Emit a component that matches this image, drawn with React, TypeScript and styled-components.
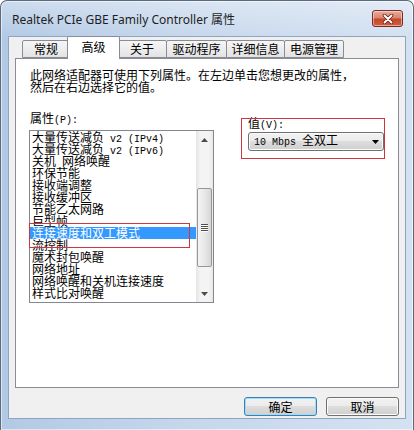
import React from 'react';
import styled, { createGlobalStyle } from 'styled-components';

const CJK = `"Noto Sans CJK SC", "Noto Sans", sans-serif`;
const MONO = `"Liberation Mono", "DejaVu Sans Mono", monospace`;

const GlobalStyle = createGlobalStyle`
  html, body {
    margin: 0;
    padding: 0;
    background: #ffffff;
  }
  body {
    width: 414px;
    height: 430px;
    overflow: hidden;
    font-family: ${CJK};
    font-size: 12px;
    color: #000;
  }
  * {
    box-sizing: border-box;
  }
`;

const Window = styled.div`
  width: 414px;
  height: 430px;
  display: flex;
  flex-direction: column;
  padding: 0 7px 11px 7px;
  border: 1px solid #5b6a7d;
  border-bottom: none;
  border-radius: 7px 7px 0 0;
  background:
    linear-gradient(180deg, rgba(255, 255, 255, 0.35) 0%, rgba(255, 255, 255, 0) 36px),
    linear-gradient(90deg, #b2c9e5 0%, #c6d7ec 45%, #d4e1f1 100%);
  box-shadow: inset 0 0 0 1px rgba(255, 255, 255, 0.55);
`;

const TitleBar = styled.div`
  height: 35px;
  flex: none;
  display: flex;
  align-items: center;
  justify-content: space-between;
  padding: 0 3px 0 4px;
`;

const Title = styled.span`
  font-family: "Noto Sans", ${CJK};
  font-size: 12px;
  color: #1e1e1e;
  white-space: nowrap;
`;

const CloseButton = styled.div`
  width: 31px;
  height: 17px;
  display: flex;
  align-items: center;
  justify-content: center;
  border: 1px solid #7a2a1e;
  border-radius: 3px;
  background: linear-gradient(180deg, #e9a99b 0%, #d98670 45%, #c8452c 55%, #d2603e 100%);
  box-shadow: inset 0 0 0 1px rgba(255, 255, 255, 0.45);
`;

const Client = styled.div`
  flex: 1;
  display: flex;
  flex-direction: column;
  padding: 0 6px;
  background: #f0f0f0;
  border: 1px solid #8ea4c0;
`;

const TabStrip = styled.div`
  height: 21px;
  flex: none;
  display: flex;
  align-items: flex-end;
  padding-left: 8px;
  position: relative;
  z-index: 1;
`;

const Tab = styled.div<{ $w: number; $active?: boolean }>`
  width: ${(p) => p.$w}px;
  height: ${(p) => (p.$active ? 23 : 18)}px;
  margin: ${(p) => (p.$active ? '0 -2px -1px -3px' : '0 0 0 -1px')};
  display: flex;
  align-items: center;
  justify-content: center;
  padding-bottom: ${(p) => (p.$active ? 3 : 0)}px;
  border: 1px solid #898c95;
  border-bottom: ${(p) => (p.$active ? 'none' : '1px solid #898c95')};
  border-radius: 2px 2px 0 0;
  background: ${(p) =>
    p.$active ? '#ffffff' : 'linear-gradient(180deg, #f5f5f5 0%, #ededed 50%, #e3e3e3 100%)'};
  position: relative;
  z-index: ${(p) => (p.$active ? 2 : 1)};
  white-space: nowrap;
  font-size: 12px;
  line-height: 12px;
`;

const Panel = styled.div`
  height: 330px;
  flex: none;
  display: flex;
  flex-direction: column;
  padding: 10px 14px 0 14px;
  background: #ffffff;
  border: 1px solid #898c95;
`;

const Hint = styled.div`
  font-size: 12px;
  line-height: 12px;
  white-space: nowrap;
`;

const Columns = styled.div`
  display: grid;
  grid-template-columns: 184px 1fr;
  column-gap: 34px;
  margin-top: 19px;
`;

const Column = styled.div<{ $top?: number }>`
  display: flex;
  flex-direction: column;
  padding-top: ${(p) => p.$top ?? 0}px;
  position: relative;
`;

const Label = styled.div`
  height: 12px;
  font-size: 12px;
  line-height: 12px;
  white-space: nowrap;
`;

const Half = styled.span`
  font-family: ${MONO};
  font-size: 10px;
  white-space: pre;
`;

const ListBox = styled.div`
  width: 185px;
  height: 173px;
  margin: 6px 0 0 -1px;
  display: flex;
  border: 1px solid #828790;
  background: #ffffff;
  position: relative;
`;

const Items = styled.div`
  flex: 1;
  display: flex;
  flex-direction: column;
`;

const Item = styled.div<{ $selected?: boolean }>`
  height: 12px;
  padding-left: 2px;
  font-size: 12px;
  line-height: 12px;
  white-space: nowrap;
  color: ${(p) => (p.$selected ? '#ffffff' : '#000000')};
  background: ${(p) => (p.$selected ? '#3399ff' : 'transparent')};
`;

const ScrollBar = styled.div`
  width: 17px;
  flex: none;
  display: flex;
  flex-direction: column;
  background: linear-gradient(90deg, #e4e4e4 0%, #f4f4f4 25%, #f4f4f4 75%, #e8e8e8 100%);
`;

const ArrowBox = styled.div`
  height: 17px;
  flex: none;
  display: flex;
  align-items: center;
  justify-content: center;
`;

const Track = styled.div`
  flex: 1;
  display: flex;
  flex-direction: column;
  padding-top: 40px;
`;

const Thumb = styled.div`
  height: 79px;
  margin: 0 1px;
  display: flex;
  flex-direction: column;
  align-items: center;
  justify-content: center;
  gap: 1px;
  border: 1px solid #979797;
  border-radius: 2px;
  background: linear-gradient(90deg, #f4f4f4 0%, #e8e8e8 50%, #d6d6d6 100%);
`;

const Grip = styled.div`
  width: 7px;
  height: 1px;
  background: #4e4e4e;
  box-shadow: 0 1px 0 #ffffff;
`;

const Dropdown = styled.div`
  height: 19px;
  margin-top: 3px;
  display: flex;
  align-items: center;
  justify-content: space-between;
  padding: 0 4px 0 5px;
  border: 1px solid #707070;
  border-radius: 3px;
  background: linear-gradient(180deg, #f2f2f2 0%, #ebebeb 50%, #dddddd 50%, #cfcfcf 100%);
  box-shadow: inset 0 0 0 1px #fbfbfb;
  font-size: 12px;
  line-height: 12px;
  white-space: nowrap;
`;

const Annotation = styled.div<{ $l: number; $t: number; $w: number; $h: number }>`
  position: absolute;
  left: ${(p) => p.$l}px;
  top: ${(p) => p.$t}px;
  width: ${(p) => p.$w}px;
  height: ${(p) => p.$h}px;
  border: 1px solid #d0343c;
  pointer-events: none;
  z-index: 3;
`;

const ButtonRow = styled.div`
  display: flex;
  justify-content: flex-end;
  gap: 9px;
  margin-top: 9px;
`;

const Button = styled.div<{ $default?: boolean }>`
  width: 73px;
  height: 19px;
  display: flex;
  align-items: center;
  justify-content: center;
  border: 1px solid ${(p) => (p.$default ? '#3c7fb1' : '#707070')};
  border-radius: 3px;
  background: linear-gradient(180deg, #f2f2f2 0%, #ebebeb 50%, #dddddd 50%, #cfcfcf 100%);
  box-shadow: inset 0 0 0 1px ${(p) => (p.$default ? '#9fdcf8' : '#fbfbfb')};
  font-size: 12px;
  line-height: 12px;
`;

const tabs = [
  { label: '常规', w: 48 },
  { label: '高级', w: 53, active: true },
  { label: '关于', w: 50 },
  { label: '驱动程序', w: 61 },
  { label: '详细信息', w: 59 },
  { label: '电源管理', w: 60 },
];

const properties = [
  '大量传送减负 v2 (IPv4)',
  '大量传送减负 v2 (IPv6)',
  '关机 网络唤醒',
  '环保节能',
  '接收端调整',
  '接收缓冲区',
  '节能乙太网路',
  '巨型帧',
  '连接速度和双工模式',
  '流控制',
  '魔术封包唤醒',
  '网络地址',
  '网络唤醒和关机连接速度',
  '样式比对唤醒',
];

// half-width latin runs use the narrow mono face, like SimSun does
const mixed = (s: string) =>
  s.split(/([\x20-\x7e]+)/).map((part, i) =>
    /[\x20-\x7e]/.test(part) ? <Half key={i}>{part}</Half> : part
  );

const Tri = ({ up, color = '#4d4d4d' }: { up?: boolean; color?: string }) => (
  <svg width="7" height="4" viewBox="0 0 7 4">
    <polygon points={up ? '0,4 3.5,0 7,4' : '0,0 7,0 3.5,4'} fill={color} />
  </svg>
);

const App = () => {
  return (
    <>
      <GlobalStyle />
      <Window>
        <TitleBar>
          <Title>Realtek PCIe GBE Family Controller 属性</Title>
          <CloseButton>
            <svg width="12" height="10" viewBox="0 0 12 10">
              <path d="M2.5 1.5 L9.5 8.5 M9.5 1.5 L2.5 8.5" stroke="#5a1a10" strokeWidth="3.4" strokeLinecap="round" />
              <path d="M2.5 1.5 L9.5 8.5 M9.5 1.5 L2.5 8.5" stroke="#ffffff" strokeWidth="2" strokeLinecap="round" />
            </svg>
          </CloseButton>
        </TitleBar>

        <Client>
          <TabStrip>
            {tabs.map((t) => (
              <Tab key={t.label} $w={t.w} $active={t.active}>
                {t.label}
              </Tab>
            ))}
          </TabStrip>

          <Panel>
            <Hint>此网络适配器可使用下列属性。在左边单击您想更改的属性，</Hint>
            <Hint>然后在右边选择它的值。</Hint>

            <Columns>
              <Column>
                <Label>{mixed('属性(P):')}</Label>
                <ListBox>
                  <Items>
                    {properties.map((p) => (
                      <Item key={p} $selected={p === '连接速度和双工模式'}>
                        {mixed(p)}
                      </Item>
                    ))}
                  </Items>
                  <ScrollBar>
                    <ArrowBox>
                      <Tri up />
                    </ArrowBox>
                    <Track>
                      <Thumb>
                        <Grip />
                        <Grip />
                        <Grip />
                        <Grip />
                      </Thumb>
                    </Track>
                    <ArrowBox>
                      <Tri />
                    </ArrowBox>
                  </ScrollBar>
                  <Annotation $l={-1} $t={92} $w={161} $h={25} />
                </ListBox>
              </Column>

              <Column $top={5}>
                <Label>{mixed('值(V):')}</Label>
                <Dropdown>
                  <span>{mixed('10 Mbps 全双工')}</span>
                  <Tri color="#000000" />
                </Dropdown>
                <Annotation $l={-7} $t={6} $w={144} $h={41} />
              </Column>
            </Columns>
          </Panel>

          <ButtonRow>
            <Button $default>确定</Button>
            <Button>取消</Button>
          </ButtonRow>
        </Client>
      </Window>
    </>
  );
};

export default App;
